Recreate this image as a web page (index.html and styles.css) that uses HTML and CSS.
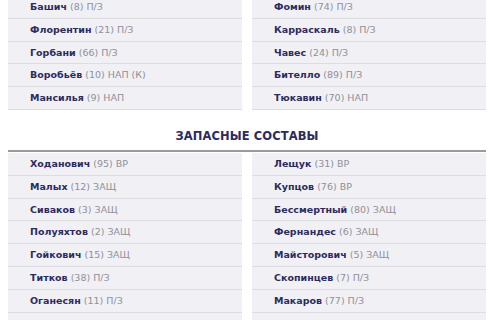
FILE: index.html
```html
<!DOCTYPE html>
<html lang="ru">
<head>
<meta charset="utf-8">
<link rel="stylesheet" href="styles.css">
</head>
<body>
<div class="page">
  <div class="cols top">
    <ul class="list">
      <li><b>Башич</b> (8) П/З</li>
      <li><b>Флорентин</b> (21) П/З</li>
      <li><b>Горбани</b> (66) П/З</li>
      <li><b>Воробьёв</b> (10) НАП (К)</li>
      <li><b>Мансилья</b> (9) НАП</li>
    </ul>
    <ul class="list">
      <li><b>Фомин</b> (74) П/З</li>
      <li><b>Карраскаль</b> (8) П/З</li>
      <li><b>Чавес</b> (24) П/З</li>
      <li><b>Бителло</b> (89) П/З</li>
      <li><b>Тюкавин</b> (70) НАП</li>
    </ul>
  </div>
  <h2 class="title">ЗАПАСНЫЕ СОСТАВЫ</h2>
  <div class="cols bottom">
    <ul class="list">
      <li><b>Ходанович</b> (95) ВР</li>
      <li><b>Малых</b> (12) ЗАЩ</li>
      <li><b>Сиваков</b> (3) ЗАЩ</li>
      <li><b>Полуяхтов</b> (2) ЗАЩ</li>
      <li><b>Гойкович</b> (15) ЗАЩ</li>
      <li><b>Титков</b> (38) П/З</li>
      <li><b>Оганесян</b> (11) П/З</li>
      <li><b>&nbsp;</b></li>
    </ul>
    <ul class="list">
      <li><b>Лещук</b> (31) ВР</li>
      <li><b>Купцов</b> (76) ВР</li>
      <li><b>Бессмертный</b> (80) ЗАЩ</li>
      <li><b>Фернандес</b> (6) ЗАЩ</li>
      <li><b>Майсторович</b> (5) ЗАЩ</li>
      <li><b>Скопинцев</b> (7) П/З</li>
      <li><b>Макаров</b> (77) П/З</li>
      <li><b>&nbsp;</b></li>
    </ul>
  </div>
</div>
</body>
</html>
```

FILE: styles.css
```css
html, body {
  margin: 0;
  padding: 0;
  background: #ffffff;
  overflow: hidden;
}
.page {
  width: 478px;
  padding: 0 14px 0 8px;
  font-family: "DejaVu Sans", "Open Sans", sans-serif;
}
.cols {
  display: grid;
  grid-template-columns: 234px 234px;
  column-gap: 10px;
}
.top {
  margin-top: -4px;
}
.list {
  list-style: none;
  margin: 0;
  padding: 0;
}
.list li {
  height: 21.8px;
  line-height: 22.6px;
  background: #f1f1f5;
  border-bottom: 1px solid #dcdce3;
  padding-left: 22px;
  font-size: 9.5px;
  color: #8f8f9a;
  white-space: nowrap;
}
.list b {
  color: #2c2b5c;
  font-weight: bold;
}
.title {
  margin: 0 0 1px;
  padding-top: 16px;
  height: 24px;
  line-height: 20px;
  text-align: center;
  font-size: 11.5px;
  font-weight: bold;
  color: #2c2b5c;
  letter-spacing: 0.1px;
  border-bottom: 2px solid #9a9aa2;
}
```
